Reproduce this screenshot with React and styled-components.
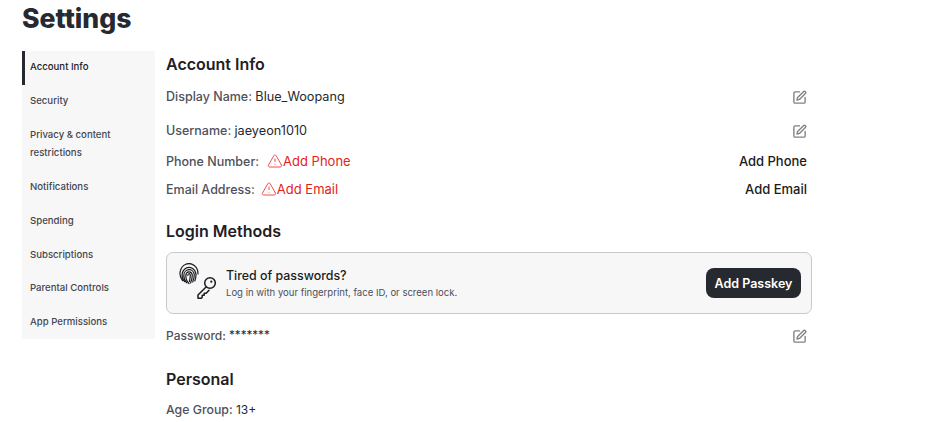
import React from "react";
import styled, { createGlobalStyle } from "styled-components";
import { SquarePen, TriangleAlert } from "lucide-react";

const Global = createGlobalStyle`
  html, body { margin: 0; padding: 0; background: #fff; overflow: hidden; }
  body { font-family: Inter, "Liberation Sans", sans-serif; color: #272930; }
`;
const Page = styled.div`
  width: 942px; height: 422px; padding: 0 0 0 22px; box-sizing: border-box; overflow: hidden;
`;
const Title = styled.h1`
  margin: 0; height: 51px; padding-top: 2px; box-sizing: border-box;
  font-size: 26.6px; line-height: 32px; font-weight: 800; color: #272930;
`;
const Columns = styled.div`
  display: flex; align-items: flex-start; gap: 11px;
`;
const Side = styled.nav`
  width: 133px; height: 288px; background: #f7f7f8; display: flex; flex-direction: column; overflow: hidden;
`;
const SideItem = styled.div`
  box-sizing: border-box; flex: none;
  height: ${p => (p.$tall ? "52px" : "33.88px")};
  padding: 7px 14px 0 ${p => (p.$active ? "5px" : "8px")};
  border-left: ${p => (p.$active ? "3px solid #272930" : "0")};
  font-size: 9.6px; line-height: 18px; font-weight: 500;
  color: ${p => (p.$active ? "#1b1c20" : "#44464f")};
`;
const Main = styled.main`
  width: 646px; display: flex; flex-direction: column;
`;
const Heading = styled.h2`
  margin: ${p => p.$mt || 0}px 0 0; font-size: 16px; line-height: 24px; font-weight: 600; color: #1f2025;
`;
const Row = styled.div`
  height: 28px; margin-top: ${p => p.$mt || 0}px;
  display: flex; align-items: center; justify-content: space-between;
  padding-right: 5px;
  font-size: 13px; font-weight: 400; color: #272930;
`;
const Label = styled.span`
  color: #4f515b; font-weight: 450; font-size: ${p => p.$size || 12.5}px;
`;
const Value = styled.span`
  display: inline-flex; align-items: center; white-space: pre;
  font-size: ${p => p.$size || 12.7}px;
`;
const Warn = styled.span`
  display: inline-flex; align-items: center; color: #e2231a; margin-left: ${p => p.$gap}px; font-size: 13px;
`;
const ActionText = styled.span`
  font-weight: 500; color: #1b1c20;
`;
const EditIcon = styled(SquarePen)`
  color: #808187; width: 15px; height: 15px; margin-top: 2px; display: block; stroke-width: 2.2;
`;
const WarnIcon = styled(TriangleAlert)`
  width: 16px; height: 16px; color: #ec4f55; stroke-width: 1.5;
`;
const Card = styled.section`
  box-sizing: border-box; height: 62px; margin-top: 9px; width: 646px;
  background: #f7f7f8; border: 1px solid #c8c9cc; border-radius: 7px;
  display: flex; align-items: center; padding: 0 10px 0 12px;
`;
const CardIcon = styled.svg`
  width: 37px; height: 40px; flex: none; margin-right: 10px; color: #1b1c20;
`;
const CardText = styled.div`
  flex: 1; display: flex; flex-direction: column;
`;
const CardTitle = styled.div`
  font-size: 12.4px; line-height: 18px; font-weight: 500; color: #1b1c20;
`;
const CardSub = styled.div`
  font-size: 9.55px; line-height: 15px; font-weight: 400; color: #4d4f59;
`;
const PasskeyButton = styled.button`
  height: 30px; width: 95px; border: 0; border-radius: 8px; background: #272930; color: #fff;
  font-family: inherit; font-size: 12.5px; font-weight: 600; padding: 0;
`;

const Fingerprint = () => (
  <CardIcon viewBox="0 0 37 40" fill="none" stroke="currentColor" strokeWidth="1.2" strokeLinecap="round">
    <path d="M3.500 17.500A9 10 0 1 1 19 11" />
    <path d="M5.500 18.500A7 8 0 1 1 17 11.500c0 2.500-.4 4.500-1.200 6.500" />
    <path d="M7.800 19.800C5.800 18 4.800 15 4.800 12.500A5.300 6 0 0 1 15.300 11.500c0 2.800-.7 5-1.600 7.500" />
    <path d="M10 20.500C8 18.500 6.800 15.500 6.800 12.500A3.300 4 0 0 1 13.300 12c0 3-.8 5.500-1.700 8" />
    <path d="M8.800 12.500A1.300 2 0 0 1 11.300 12c0 2.500-.3 4.500-.9 6.500" />
    <circle cx="31" cy="20" r="5.300" strokeWidth="1.500" />
    <circle cx="32.300" cy="18.700" r="1.100" fill="currentColor" stroke="none" />
    <path d="M27.300 23.800 19 32v3.200h3.400l.8-.9v-2h2v-2h2l2.800-3" strokeWidth="1.500" strokeLinejoin="round" />
  </CardIcon>
);

const nav = ["Security", "Privacy & content restrictions", "Notifications", "Spending", "Subscriptions", "Parental Controls", "App Permissions"];

export default function App() {
  return (
    <Page>
      <Global />
      <Title>Settings</Title>
      <Columns>
        <Side>
          <SideItem $active>Account Info</SideItem>
          {nav.map(n => (
            <SideItem key={n} $tall={n.startsWith("Privacy")}>{n}</SideItem>
          ))}
        </Side>
        <Main>
          <Heading $mt={1}>Account Info</Heading>
          <Row $mt={6}><Value><Label>Display Name: </Label>Blue_Woopang</Value><EditIcon /></Row>
          <Row $mt={6}><Value><Label>Username: </Label>jaeyeon1010</Value><EditIcon /></Row>
          <Row $mt={3}><Value><Label>Phone Number:</Label><Warn $gap={8}><WarnIcon />Add Phone</Warn></Value><ActionText>Add Phone</ActionText></Row>
          <Row><Value><Label>Email Address:</Label><Warn $gap={6}><WarnIcon />Add Email</Warn></Value><ActionText>Add Email</ActionText></Row>
          <Heading $mt={16}>Login Methods</Heading>
          <Card>
            <Fingerprint />
            <CardText>
              <CardTitle>Tired of passwords?</CardTitle>
              <CardSub>Log in with your fingerprint, face ID, or screen lock.</CardSub>
            </CardText>
            <PasskeyButton>Add Passkey</PasskeyButton>
          </Card>
          <Row $mt={7}><Value $size={11.6}><Label $size={12}>Password: </Label>*******</Value><EditIcon /></Row>
          <Heading $mt={18}>Personal</Heading>
          <Row $mt={4}><Value $size={12}><Label $size={12.3}>Age Group: </Label>13+</Value></Row>
        </Main>
      </Columns>
    </Page>
  );
}
